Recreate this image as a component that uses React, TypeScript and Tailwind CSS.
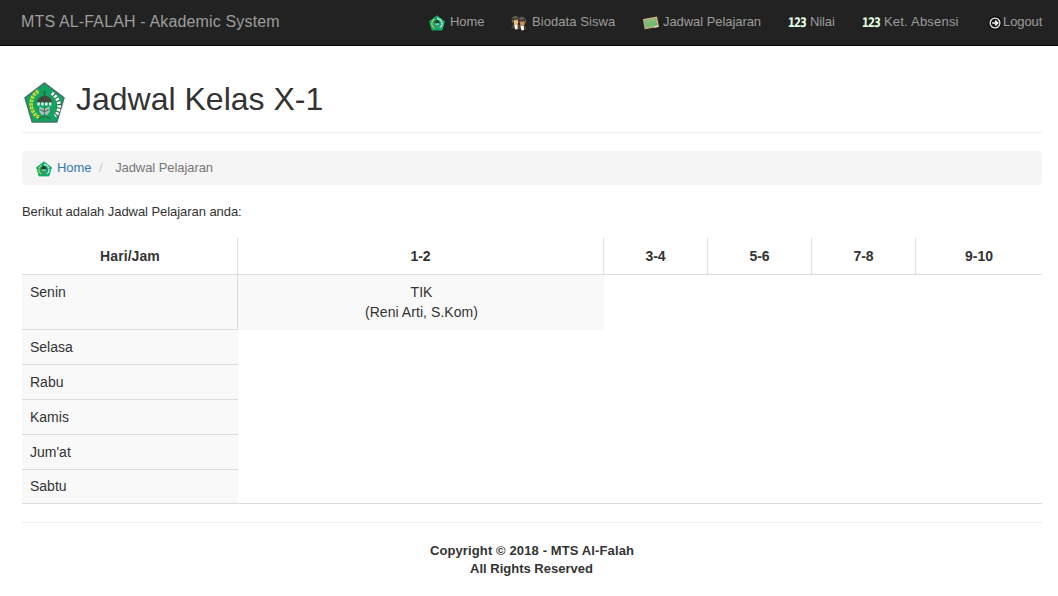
import type { ReactNode } from 'react';

function Crest({ className }: { className: string }) {
  return (
    <svg viewBox="0 0 40 40" className={className}>
      <path d="M20 1 39 15.5 32 39H8L1 15.5Z" fill="#0fa463" stroke="#427565" strokeWidth="1.5" />
      <path d="M14 9C7 13 5 22 9 29q3 5 6 5" fill="none" stroke="#d4dc35" strokeWidth="3.6" strokeDasharray="2.6 .9" />
      <path d="M14 9C7 13 5 22 9 29q3 5 6 5" fill="none" stroke="#7fbb36" strokeWidth=".8" />
      <path d="M27 11c5 3 8 9 7 15q-1 5-4 7" fill="none" stroke="#2b654e" strokeWidth="4.2" />
      <path d="M27 11c5 3 8 9 7 15q-1 5-4 7" fill="none" stroke="#f1fff6" strokeWidth="3.6" strokeDasharray="2.4 1.1" />
      <path d="M20 9v5" stroke="#514c3b" strokeWidth="1.5" />
      <path d="M12.5 20q1-6 7.5-6.500q6.500.5 7.500 6.500Z" fill="#44473b" />
      <path d="M13 21.500h14" stroke="#e8f5e9" strokeWidth="3" strokeDasharray="2.400 1.400" />
      <path d="m15 24 5 2 5-2v5l-2 3h-6l-2-3Z" fill="#b3bcb8" />
      <path d="m16 27 4 2 4-2M20 25v8" fill="none" stroke="#4d6e61" strokeWidth="1" />
      <path d="m14 36 4-2h4l4 2" fill="none" stroke="#42633c" strokeWidth="1.200" />
    </svg>
  );
}

function SmallCrest({ className }: { className: string }) {
  return (
    <svg viewBox="0 0 16 16" className={className}>
      <path d="M8 .8 15.500 6.500 13 15H3L.5 6.500Z" fill="#12a568" stroke="#16b872" strokeWidth=".8" />
      <path d="M5 4.500Q2 7 3.200 10.500q.8 2 2 2.500" fill="none" stroke="#d7d94c" strokeWidth="1.300" strokeDasharray="1.500 .6" />
      <path d="M8 3.500q4 .5 4.800 4t-2 5" fill="none" stroke="#d8f7e8" strokeWidth="1.500" strokeDasharray="1.800 .5" />
      <path d="M5.300 8.500Q6 5 8 5t2.700 3.500Z" fill="#26382d" />
      <path d="M6 9h4" stroke="#d3e7db" strokeWidth="1" />
      <path d="M6.500 10.500h3v2h-3Z" fill="#598d71" />
    </svg>
  );
}

function Students() {
  return (
    <svg viewBox="0 0 16 16" className="mt-px h-4 w-4 shrink-0">
      <path d="M0 13 2 9l3-1 4 2h4l3 4-4 1-3-1-3 1-2-1Z" fill="#484039" />
      <path d="M3 9.500 4.300 14.500 6.700 14 6.500 9ZM9.300 10.500l1.200 5 2.500-.5-.2-4.500Z" fill="#fffaf0" />
      <path d="M2.500 4.500 6.500 4l1 3.500L5.700 10 3 9Z" fill="#e6bd87" />
      <path d="M8.500 6 13 5.500l1 3.500-2 2-2.700-1Z" fill="#c98f4c" />
      <path d="m.2 3 3.800-2.200L8 2 4.500 4.300ZM7 3.800 10.500 1.500l4 1.800-4 2.400Z" fill="#635c54" />
      <path d="m1.500 4 3 .8L7 3.400M8.500 5.300l2.200 1L13.300 5" stroke="#322922" strokeWidth="1" fill="none" />
      <path d="M1 4l.8 4M14.200 4.300l.6 4" stroke="#8e7961" strokeWidth=".8" />
    </svg>
  );
}

function Board() {
  return (
    <svg viewBox="0 0 16 14" className="mt-px h-[14px] w-4 shrink-0">
      <path d="m.6 3.600 13-2.300 1.600 9-13 2.300Z" fill="#75ba72" stroke="#d5ae88" strokeWidth="1.200" />
      <path d="m3 5.500 9-1.600" stroke="#93cc8c" strokeWidth="1" />
      <path d="m11 11 4.500-.8" stroke="#f1d4b1" strokeWidth="1.400" />
    </svg>
  );
}

function Digits() {
  return (
    <span className="w-[22px] shrink-0">
      <span className="block w-[22px] origin-left translate-y-px scale-x-[0.84] -skew-x-3 font-['DejaVu_Sans_Condensed','DejaVu_Sans',sans-serif] text-[13px] font-bold leading-5 tracking-[-1px] text-[#e3ffe4]">
        123
      </span>
    </span>
  );
}

function LogoutIcon() {
  return (
    <svg viewBox="0 0 14 14" className="mt-[2px] h-[14px] w-[14px] shrink-0">
      <circle cx="7" cy="7" r="6.800" fill="#090909" />
      <circle cx="7" cy="7" r="4.900" fill="#171717" stroke="#efefef" strokeWidth="1.300" />
      <path d="M4.200 7h5M7.200 4.600 9.700 7 7.200 9.400" fill="none" stroke="#f5f5f5" strokeWidth="1.500" />
    </svg>
  );
}

function NavItem({ icon, label, className }: { icon: ReactNode; label: string; className: string }) {
  return (
    <a className={`flex shrink-0 items-center whitespace-nowrap ${className}`}>
      {icon}
      <span>{label}</span>
    </a>
  );
}

const days = ['Selasa', 'Rabu', 'Kamis', "Jum'at"];

export default function App() {
  return (
    <div className="h-[596px] w-full overflow-hidden bg-white font-['Liberation_Sans',Arial,sans-serif] text-[13px] leading-[18px] text-[#333]">
      <header className="flex h-[46px] justify-between border-b border-[#080808] bg-[#222] pl-[21px] text-[#9d9d9d]">
        <div className="whitespace-nowrap pt-3 text-[16px] leading-5 tracking-[0.15px]">MTS AL-FALAH - Akademic System</div>
        <nav className="flex w-[629px] pt-3 leading-5">
          <div className="flex h-5">
            <NavItem className="w-[82px] gap-[5px] tracking-[-0.1px]" icon={<SmallCrest className="mt-[2px] h-4 w-4" />} label="Home" />
            <NavItem className="w-[132px] gap-[5px] tracking-[0.07px]" icon={<Students />} label="Biodata Siswa" />
            <NavItem className="w-[145px] gap-1 tracking-[-0.06px]" icon={<Board />} label="Jadwal Pelajaran" />
            <NavItem className="w-[74px] tracking-[-0.1px]" icon={<Digits />} label="Nilai" />
            <NavItem className="w-[126px] tracking-[0.2px]" icon={<Digits />} label="Ket. Absensi" />
            <NavItem className="w-[54px] gap-px tracking-[-0.1px]" icon={<LogoutIcon />} label="Logout" />
          </div>
        </nav>
      </header>

      <main className="pl-[22px] pr-4">
        <div className="flex h-[87px] border-b border-[#eee] pl-[2px] pt-9">
          <Crest className="h-[41px] w-[41px]" />
          <h1 className="ml-[11px] whitespace-nowrap text-[32px] leading-[35px]">Jadwal Kelas X-1</h1>
        </div>

        <div className="mt-[18px] flex h-[34px] items-center rounded-[4px] bg-[#f5f5f5] pl-[14px]">
          <SmallCrest className="mr-[5px] mt-[2px] h-4 w-4" />
          <a className="w-[35px] tracking-[-0.1px] text-[#337ab7]">Home</a>
          <span className="ml-[7px] text-[#ccc]">/</span>
          <span className="ml-[12.5px] tracking-[-0.07px] text-[#777]">Jadwal Pelajaran</span>
        </div>

        <p className="mt-[17px] leading-5 tracking-[-0.06px]">Berikut adalah Jadwal Pelajaran anda:</p>

        <section className="mt-4 border-b border-[#ddd] text-[14px] leading-5">
          <div className="flex h-[37px] border-b border-[#ddd] text-center font-bold leading-9">
            <div className="w-[216px] border-r border-[#ddd] pl-px tracking-[0.08px]">Hari/Jam</div>
            <div className="w-[366px] border-r border-[#ddd]">1-2</div>
            <div className="w-[104px] border-r border-[#ddd]">3-4</div>
            <div className="w-[104px] border-r border-[#ddd]">5-6</div>
            <div className="w-[104px] border-r border-[#ddd]">7-8</div>
            <div className="flex-1">9-10</div>
          </div>
          <div className="flex h-[55px]">
            <div className="w-[216px] border-b border-r border-[#ddd] bg-[#f9f9f9] px-2 pt-[7px]">Senin</div>
            <div className="w-[366px] bg-[#f9f9f9] pl-px pt-[7px] text-center tracking-[0.06px]">TIK<br />(Reni Arti, S.Kom)</div>
          </div>
          {days.map((day) => (
            <div key={day} className="h-[35px] w-[216px] border-b border-[#ddd] bg-[#f9f9f9] px-2 pt-[7px]">{day}</div>
          ))}
          <div className="h-[33px] w-[216px] bg-[#f9f9f9] px-2 pt-[6px]">Sabtu</div>
        </section>

        <footer className="mt-[18px] border-t border-[#eee] pt-[19px] text-center font-bold">
          <p className="tracking-[0.12px]">Copyright © 2018 - MTS Al-Falah</p>
          <p className="-ml-px">All Rights Reserved</p>
        </footer>
      </main>
    </div>
  );
}
